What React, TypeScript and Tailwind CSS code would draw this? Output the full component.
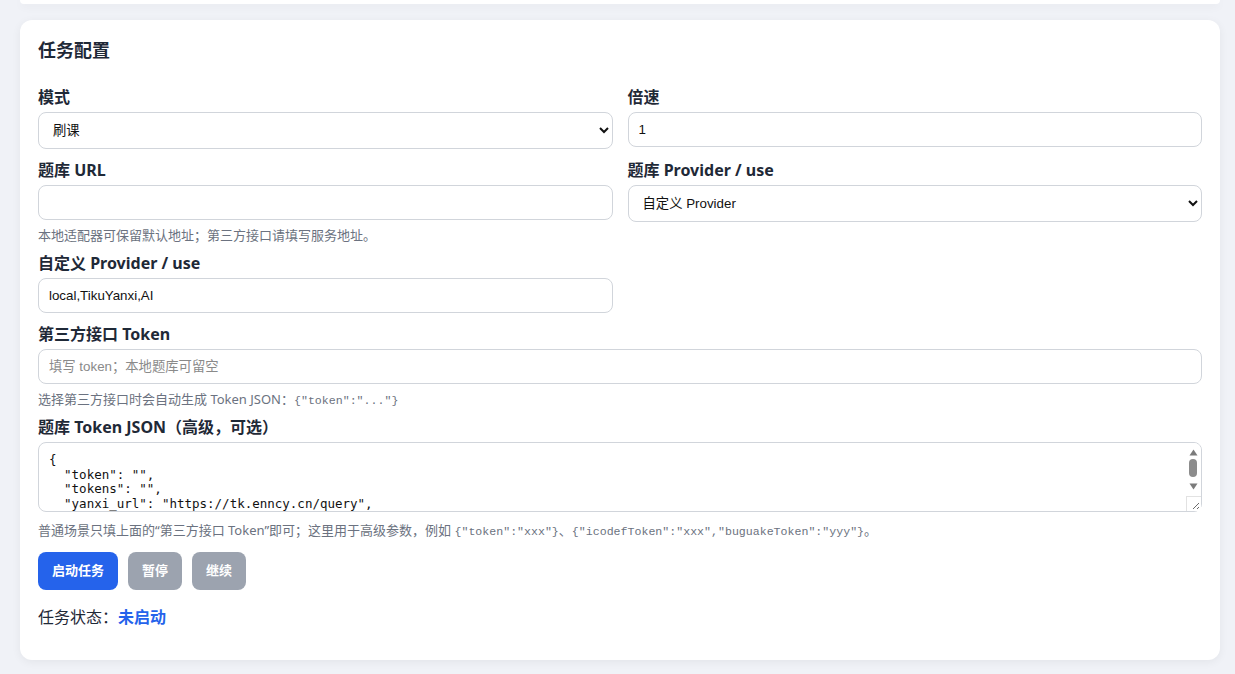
import React from "react";

const labelCls =
  "block text-[16px] font-bold leading-[22px] mb-[4px] text-[#1f2937]";
const inputCls =
  "block w-full h-[35px] rounded-[8px] border border-[#d1d5db] bg-white px-[10px] font-['Liberation_Sans','Noto_Sans_CJK_SC',sans-serif] text-[13.33px] text-[#111] outline-none placeholder:text-[#8a8a8a]";
const selectCls =
  "block w-full h-[37px] rounded-[8px] border border-[#d1d5db] bg-white px-[10px] font-['Liberation_Sans','Noto_Sans_CJK_SC',sans-serif] text-[13.33px] text-[#111] outline-none";
const hintCls =
  "h-[18px] whitespace-nowrap text-[13px] leading-[18px] text-[#6b7280] font-['Noto_Sans','Noto_Sans_CJK_SC',sans-serif]";
const codeCls = "font-['Liberation_Mono',monospace] text-[11.6px] leading-[0]";

const json = `{
  "token": "",
  "tokens": "",
  "yanxi_url": "https://tk.enncy.cn/query",
  "yanxi_token": "",
  "icodefToken": "",
  "buguakeToken": ""
}`;

function FakeScrollbar() {
  return (
    <div className="pointer-events-none absolute right-[1px] top-[1px] bottom-[1px] w-[15px] bg-white rounded-tr-[7px] rounded-br-[7px]">
      <svg
        className="absolute left-[3px] top-[6px]"
        width="9"
        height="7"
        viewBox="0 0 9 7"
      >
        <path d="M4.5 0.5 L8.5 6.5 L0.5 6.5 Z" fill="#7b7b7b" />
      </svg>
      <div className="absolute left-[3px] top-[16px] h-[18px] w-[8px] rounded-[4px] bg-[#8c8c8c]" />
      <svg
        className="absolute left-[3px] top-[40px]"
        width="9"
        height="7"
        viewBox="0 0 9 7"
      >
        <path d="M0.5 0.5 L8.5 0.5 L4.5 6.5 Z" fill="#7b7b7b" />
      </svg>
      <div className="absolute bottom-0 left-0 h-[15px] w-[15px] border-l border-t border-[#e2e2e2] bg-white">
        <svg
          className="absolute right-[1px] bottom-[1px]"
          width="10"
          height="10"
          viewBox="0 0 10 10"
        >
          <path d="M9 3 L3 9 M9 7 L7 9" stroke="#6b6b6b" strokeWidth="1" />
        </svg>
      </div>
    </div>
  );
}

export default function App() {
  return (
    <div className="min-h-screen bg-[#f0f2f7] pl-[20px] pr-[15px] font-['Noto_Sans','Noto_Sans_CJK_SC',sans-serif] text-[#1f2937]">
      <div className="h-[4px] rounded-b-[12px] bg-white shadow-[0_2px_10px_rgba(0,0,0,0.06)]" />
      <div className="mt-[16px] rounded-[12px] bg-white px-[18px] pt-[18px] pb-[31px] shadow-[0_2px_10px_rgba(0,0,0,0.06)]">
        <h2 className="text-[18px] font-bold leading-[24px] text-[#1f2937]">任务配置</h2>

        <div className="mt-[24px] grid grid-cols-2 gap-x-[15px]">
          <div>
            <label className={labelCls}>模式</label>
            <select className={selectCls} defaultValue="brush">
              <option value="brush">刷课</option>
              <option value="exam">考试</option>
            </select>
          </div>
          <div>
            <label className={labelCls}>倍速</label>
            <input className={inputCls} defaultValue="1" />
          </div>
        </div>

        <div className="mt-[10px] grid grid-cols-2 gap-x-[15px]">
          <div>
            <label className={labelCls}>题库 URL</label>
            <input className={inputCls} defaultValue="" />
            <div className={`mt-[6px] ${hintCls}`}>
              本地适配器可保留默认地址；第三方接口请填写服务地址。
            </div>
          </div>
          <div>
            <label className={labelCls}>题库 Provider / use</label>
            <select className={selectCls} defaultValue="custom">
              <option value="custom">自定义 Provider</option>
              <option value="local">local</option>
            </select>
          </div>
        </div>

        <div className="mt-[8px] grid grid-cols-2 gap-x-[15px]">
          <div>
            <label className={labelCls}>自定义 Provider / use</label>
            <input className={inputCls} defaultValue="local,TikuYanxi,AI" />
          </div>
          <div />
        </div>

        <div className="mt-[10px]">
          <label className={labelCls}>第三方接口 Token</label>
          <input
            className={inputCls}
            placeholder="填写 token；本地题库可留空"
          />
          <div className={`mt-[6px] ${hintCls}`}>
            选择第三方接口时会自动生成 Token JSON：
            <code className={codeCls}>{'{"token":"..."}'}</code>
          </div>
        </div>

        <div className="mt-[8px]">
          <label className={labelCls}>题库 Token JSON（高级，可选）</label>
          <div className="relative">
            <textarea
              className="block w-full h-[70px] resize-none overflow-hidden rounded-[8px] border border-[#d1d5db] bg-white pl-[10px] pr-[20px] pt-[10px] font-['DejaVu_Sans_Mono',monospace] text-[12.5px] leading-[14.6px] text-[#111] outline-none"
              defaultValue={json}
            />
            <FakeScrollbar />
          </div>
          <div className={`mt-[9px] ${hintCls}`}>
            普通场景只填上面的“第三方接口 Token”即可；这里用于高级参数，例如{" "}
            <code className={codeCls}>{'{"token":"xxx"}'}</code>、
            <code className={codeCls}>
              {'{"icodefToken":"xxx","buguakeToken":"yyy"}'}
            </code>
            。
          </div>
        </div>

        <div className="mt-[13px] flex gap-[10px]">
          <button className="h-[38px] rounded-[8px] bg-[#2563eb] px-[14px] text-[13px] font-bold text-white">
            启动任务
          </button>
          <button className="h-[38px] rounded-[8px] bg-[#9ca3af] px-[14px] text-[13px] font-bold text-white">
            暂停
          </button>
          <button className="h-[38px] rounded-[8px] bg-[#9ca3af] px-[14px] text-[13px] font-bold text-white">
            继续
          </button>
        </div>

        <div className="mt-[15px] text-[16px] leading-[24px] text-[#1f2937]">
          任务状态：<span className="font-semibold text-[#2563eb]">未启动</span>
        </div>
      </div>
    </div>
  );
}
